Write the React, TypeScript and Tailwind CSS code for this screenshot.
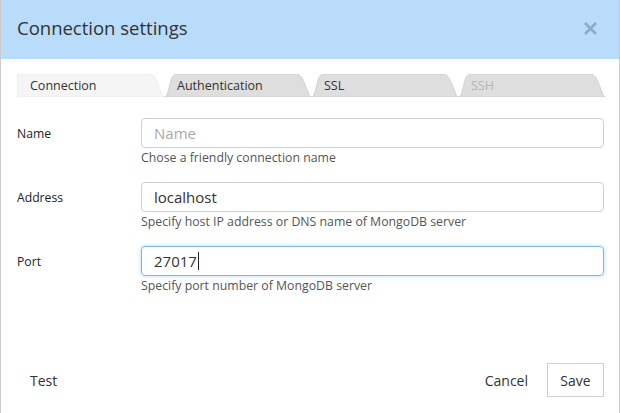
import React from 'react'

const font = { fontFamily: '"Open Sans", "Noto Sans", Arial, sans-serif' }

// === Tabs ===

function TabShape({ first, active }: { first: boolean; active: boolean }): React.JSX.Element {
  const d = first
    ? 'M0,23 L0,0 L131,0 C136,0 138,3 140,8 L144,18 C145,21 146,23 147,23 Z'
    : 'M0,23 C2,23 3,21 4,18 L7,6 C8,2 10,0 14,0 L131,0 C136,0 138,3 140,8 L144,18 C145,21 146,23 147,23 Z'
  return (
    <svg className="absolute inset-0" width="147" height="23" viewBox="0 0 147 23">
      <path
        d={d}
        fill={active ? '#f5f5f5' : '#dedede'}
        stroke={active ? '#ececec' : '#d2d2d2'}
        strokeWidth="1"
      />
    </svg>
  )
}

function Tab({ label, first, active, disabled }: { label: string; first?: boolean; active?: boolean; disabled?: boolean }): React.JSX.Element {
  return (
    <div className="relative w-[147px] h-[23px] shrink-0">
      <TabShape first={!!first} active={!!active} />
      <span
        className={
          'relative block pl-[13px] leading-[24px] text-[12.5px] ' +
          (disabled ? 'text-[#b5b5b5]' : 'text-[#333]')
        }
      >
        {label}
      </span>
    </div>
  )
}

// === Form row ===

function Field({
  label,
  value,
  placeholder,
  help,
  focused
}: {
  label: string
  value?: string
  placeholder?: string
  help: string
  focused?: boolean
}): React.JSX.Element {
  return (
    <div className="flex h-[64px]">
      <div className="w-[124px] shrink-0 h-[30px] pt-[3px] flex items-center text-[12.2px] text-[#222]">{label}</div>
      <div className="flex-1 flex flex-col">
        <div
          className={
            'h-[30px] rounded-[4px] border flex items-center px-[12px] text-[15px] ' +
            (focused
              ? 'border-[#7fb6e6] shadow-[0_0_4px_rgba(102,175,233,0.45)] text-[#333]'
              : 'border-[#cfcfcf] text-[#333]')
          }
        >
          {value ? (
            <span className="flex items-center">
              {value}
              {focused && <span className="inline-block w-px h-[18px] bg-[#222] ml-px" />}
            </span>
          ) : (
            <span className="text-[#a9a9a9]">{placeholder}</span>
          )}
        </div>
        <div className="text-[12.3px] text-[#555] leading-[18px] mt-px">{help}</div>
      </div>
    </div>
  )
}

export default function App(): React.JSX.Element {
  return (
    <div style={font} className="w-[620px] h-[413px] bg-white border-l border-r border-[#cccccc] flex flex-col overflow-hidden">
      {/* Header */}
      <div className="h-[59px] bg-[#b9dcfa] flex items-center justify-between pl-[16px] pr-[21px] pb-[4px] shrink-0">
        <span className="text-[18.5px] text-[#333]">Connection settings</span>
        <svg width="15" height="15" viewBox="0 0 15 15" className="mt-px">
          <path d="M2,2 L13,13 M13,2 L2,13" stroke="#8ea9c0" strokeWidth="2.6" strokeLinecap="butt" />
        </svg>
      </div>

      {/* Tabs */}
      <div className="flex pl-[16px] mt-[15px] h-[23px]">
        <Tab label="Connection" first active />
        <Tab label="Authentication" />
        <Tab label="SSL" />
        <Tab label="SSH" disabled />
      </div>

      {/* Form */}
      <div className="flex flex-col pl-[16px] pr-[15px] pt-[21px]">
        <Field label="Name" placeholder="Name" help="Chose a friendly connection name" />
        <Field label="Address" value="localhost" help="Specify host IP address or DNS name of MongoDB server" />
        <Field label="Port" value="27017" focused help="Specify port number of MongoDB server" />
      </div>

      {/* Footer */}
      <div className="mt-auto mb-[16px] flex items-center pl-[29px] pr-[15px] text-[14px] text-[#333]">
        <span>Test</span>
        <span className="ml-auto mr-[19px]">Cancel</span>
        <div className="w-[57px] h-[34px] border border-[#cfcfcf] flex items-center justify-center">Save</div>
      </div>
    </div>
  )
}
